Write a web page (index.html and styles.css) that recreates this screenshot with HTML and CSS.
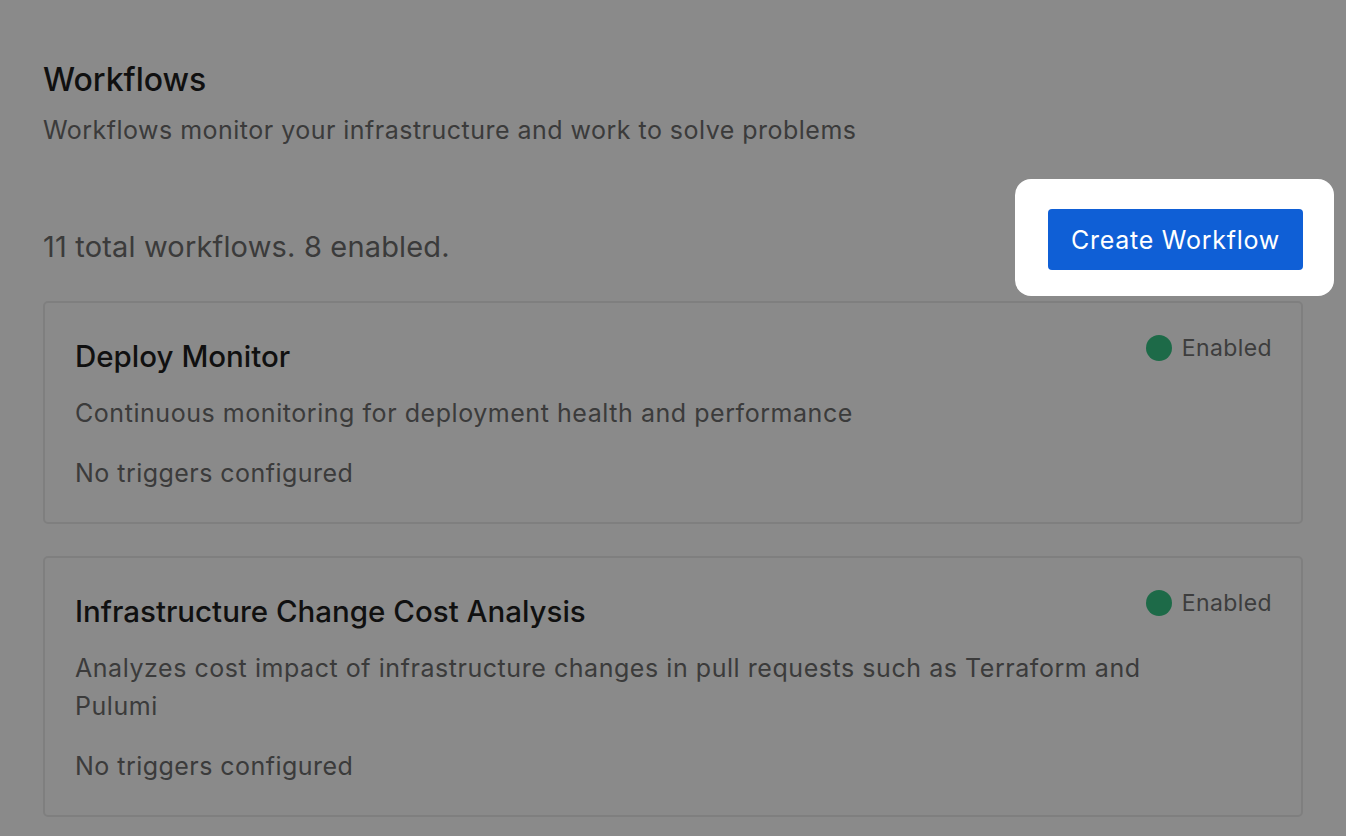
FILE: index.html
```html
<!DOCTYPE html>
<html lang="en">
<head>
<meta charset="utf-8">
<title>Workflows</title>
<link rel="stylesheet" href="styles.css">
</head>
<body>
<main class="page">
  <header class="page-header">
    <h1 class="page-title">Workflows</h1>
    <p class="page-subtitle">Workflows monitor your infrastructure and work to solve problems</p>
  </header>
  <div class="toolbar">
    <p class="count">11 total workflows. 8 enabled.</p>
    <span class="spotlight">
      <button class="btn-primary" type="button">Create Workflow</button>
    </span>
  </div>
  <section class="list">
    <article class="card">
      <div class="card-main">
        <h2 class="card-title">Deploy Monitor</h2>
        <p class="card-desc">Continuous monitoring for deployment health and performance</p>
        <p class="card-meta">No triggers configured</p>
      </div>
      <div class="status"><span class="dot"></span><span class="status-label">Enabled</span></div>
    </article>
    <article class="card">
      <div class="card-main">
        <h2 class="card-title">Infrastructure Change Cost Analysis</h2>
        <p class="card-desc">Analyzes cost impact of infrastructure changes in pull requests such as Terraform and Pulumi</p>
        <p class="card-meta">No triggers configured</p>
      </div>
      <div class="status"><span class="dot"></span><span class="status-label">Enabled</span></div>
    </article>
  </section>
</main>
</body>
</html>
```

FILE: styles.css
```css
* { box-sizing: border-box; }
html, body { margin: 0; padding: 0; }
body {
  background: #ffffff;
  font-family: Inter, "Noto Sans", "Liberation Sans", sans-serif;
  color: #1f1f1f;
  overflow: hidden;
  height: 836px;
}
.page {
  padding: 60px 43px 0 43px;
}
.page-title {
  margin: 0;
  font-size: 32px;
  line-height: 40px;
  font-weight: 500;
  color: #1f1f1f;
}
.page-subtitle {
  margin: 14px 0 0 0;
  font-size: 25px;
  line-height: 32px;
  letter-spacing: 0.48px;
  color: #6e6e6e;
}
.toolbar {
  display: flex;
  justify-content: space-between;
  align-items: flex-end;
  margin-top: 63px;
}
.count {
  margin: 0 0 5px 0;
  font-size: 29px;
  line-height: 36px;
  letter-spacing: 0.17px;
  color: #6e6e6e;
}
.spotlight {
  position: relative;
  z-index: 1;
  display: block;
}
.spotlight::before {
  content: "";
  position: absolute;
  inset: -30px -31px -26px -33px;
  background: #ffffff;
  border-radius: 16px;
  box-shadow: 0 0 0 4000px rgba(0, 0, 0, 0.46);
  z-index: -1;
}
.btn-primary {
  display: block;
  width: 255px;
  height: 61px;
  border: 0;
  border-radius: 4px;
  background: #0f5fd6;
  color: #ffffff;
  font-family: inherit;
  font-size: 25px;
  letter-spacing: 0.75px;
  font-weight: 400;
  padding: 0;
}
.list {
  display: flex;
  flex-direction: column;
  gap: 32px;
  margin-top: 31px;
}
.card {
  display: flex;
  align-items: flex-start;
  gap: 2px;
  border: 2px solid #ebebeb;
  border-radius: 5px;
  padding: 36px 29px 30px 30px;
}
.card-main {
  flex: 1;
  min-width: 0;
}
.card-title {
  margin: 0;
  font-size: 29.5px;
  line-height: 34px;
  font-weight: 500;
  color: #1f1f1f;
}
.card-desc {
  margin: 21px 0 0 0;
  font-size: 25px;
  line-height: 38px;
  letter-spacing: 0.55px;
  color: #6e6e6e;
}
.card-meta {
  margin: 22px 0 0 0;
  font-size: 25px;
  line-height: 38px;
  letter-spacing: 0.46px;
  color: #6e6e6e;
}
.status {
  display: flex;
  align-items: center;
  gap: 10px;
  margin-top: -6px;
  flex-shrink: 0;
}
.dot {
  width: 26px;
  height: 26px;
  border-radius: 50%;
  background: #37c585;
}
.status-label {
  font-size: 23px;
  line-height: 30px;
  color: #727272;
  letter-spacing: 0.4px;
}
```
